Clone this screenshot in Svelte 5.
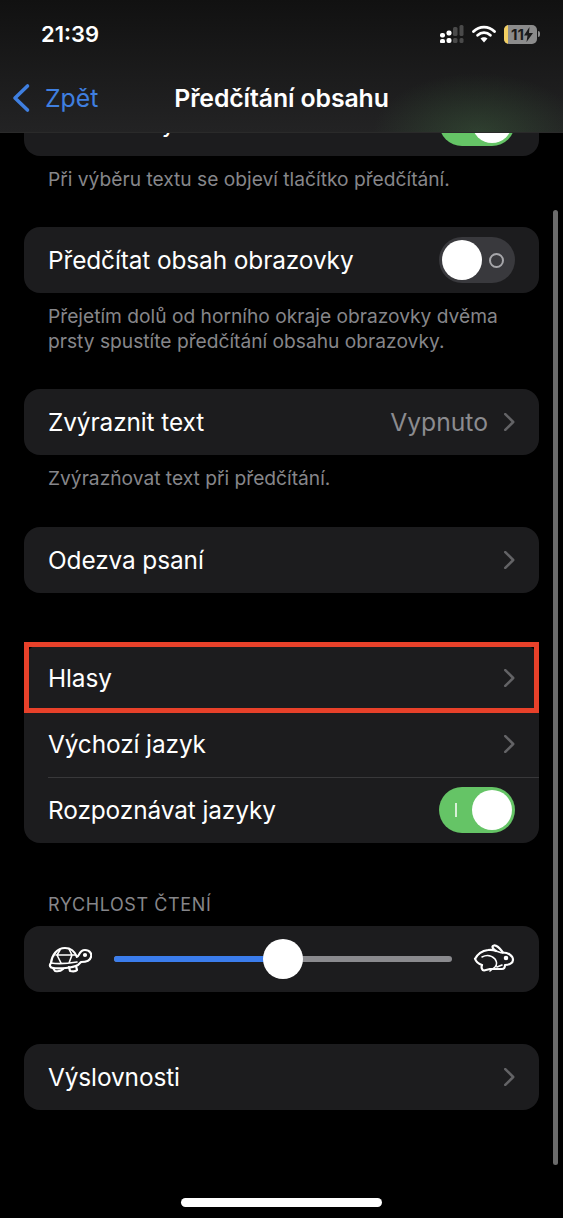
<script>
  const chevron = 'M1 1l7.5 7.5L1 16';
</script>

<div class="phone">
  <header class="top">
    <div class="status">
      <span class="time">21:39</span>
      <div class="status-icons">
        <svg width="24" height="18" viewBox="0 0 24 18">
          <rect x="0" y="8" width="5" height="4.500" rx="2" fill="#fff" />
          <rect x="0" y="14" width="5" height="4.500" rx="2" fill="#fff" />
          <rect x="6.500" y="5.500" width="5" height="5" rx="2" fill="#fff" />
          <rect x="6.500" y="13" width="5" height="5" rx="2" fill="#fff" />
          <rect x="13" y="2" width="4.500" height="9" rx="1.500" fill="#4a4a4a" />
          <rect x="13" y="13" width="4.500" height="5" rx="1.500" fill="#4a4a4a" />
          <rect x="19.500" y="0" width="4" height="11" rx="1.500" fill="#4a4a4a" />
          <rect x="19.500" y="13" width="4" height="5" rx="1.500" fill="#4a4a4a" />
        </svg>
        <svg width="24" height="18" viewBox="0 0 24 18">
          <path d="M1.500 6.500C4.300 3.800 8 2.200 12 2.200s7.700 1.600 10.500 4.300" stroke="#fff" stroke-width="2.800" fill="none" stroke-linecap="round" />
          <path d="M5.600 10.300C7.300 8.700 9.500 7.700 12 7.700s4.700 1 6.400 2.600" stroke="#fff" stroke-width="2.800" fill="none" stroke-linecap="round" />
          <path d="M8.500 13.600c1-.9 2.200-1.400 3.500-1.400s2.500.5 3.500 1.400L12 17.400z" fill="#fff" />
        </svg>
        <div class="battery">
          <div class="battery-body">
            <span class="battery-level"></span>
            <span class="battery-text">11</span>
            <svg width="9" height="15" viewBox="0 0 9 15"><path d="M5.500 0L0 8.500h3.500L2.500 15 9 6H5z" fill="#1a1a1a" /></svg>
          </div>
          <span class="battery-cap"></span>
        </div>
      </div>
    </div>
    <nav class="nav">
      <div class="back">
        <svg width="20" height="30" viewBox="0 0 20 30"><path d="M16.500 3L4 15l12.500 12" fill="none" stroke="#3f7fe0" stroke-width="3.600" stroke-linecap="round" stroke-linejoin="round" /></svg>
        <span>Zpět</span>
      </div>
      <h1>Předčítání obsahu</h1>
    </nav>
  </header>

  <main class="content">
    <section class="group noted">
      <div class="card">
        <div class="row">
          <span class="label">Předčíst výběr</span>
          <span class="toggle on"><i class="mark-on"></i><b></b></span>
        </div>
      </div>
      <p class="note">Při výběru textu se objeví tlačítko předčítání.</p>
    </section>

    <section class="group noted">
      <div class="card">
        <div class="row">
          <span class="label">Předčítat obsah obrazovky</span>
          <span class="toggle"><b></b><i class="mark-off"></i></span>
        </div>
      </div>
      <p class="note">Přejetím dolů od horního okraje obrazovky dvěma<br />prsty spustíte předčítání obsahu obrazovky.</p>
    </section>

    <section class="group noted">
      <div class="card">
        <div class="row">
          <span class="label">Zvýraznit text</span>
          <span class="value">Vypnuto</span>
          <svg class="chev" width="11" height="18" viewBox="0 0 10 17"><path d={chevron} /></svg>
        </div>
      </div>
      <p class="note">Zvýrazňovat text při předčítání.</p>
    </section>

    <section class="group after-notes">
      <div class="card">
        <div class="row">
          <span class="label">Odezva psaní</span>
          <svg class="chev" width="11" height="18" viewBox="0 0 10 17"><path d={chevron} /></svg>
        </div>
      </div>
    </section>

    <section class="group">
      <div class="card">
        <div class="row highlighted">
          <span class="label">Hlasy</span>
          <svg class="chev" width="11" height="18" viewBox="0 0 10 17"><path d={chevron} /></svg>
        </div>
        <div class="row">
          <span class="label">Výchozí jazyk</span>
          <svg class="chev" width="11" height="18" viewBox="0 0 10 17"><path d={chevron} /></svg>
        </div>
        <div class="row divided">
          <span class="label">Rozpoznávat jazyky</span>
          <span class="toggle on"><i class="mark-on"></i><b></b></span>
        </div>
      </div>
    </section>

    <section class="group">
      <h2>RYCHLOST ČTENÍ</h2>
      <div class="card">
        <div class="row slider-row">
          <svg class="speed" width="44" height="28" viewBox="0 0 44 28" fill="none" stroke="#fff" stroke-width="2.200" stroke-linecap="round" stroke-linejoin="round">
            <path d="M3 18C4 10 9 3 17 3c6 0 10 4 12 9 2 0 2-7 8-7 5 0 7 4 6 7-1 4-6 5-10 5l-3 3c-6 3-18 4-25 3-3 0-4-3-2-5z" />
            <path d="M5 23l2 3c3 .6 6 0 8-2M21 22l1 4c3 .6 6 .4 7-1l-1-4" />
            <path d="M8 10h19M12 5l-3 5 4 8M21 4l3 6-3 8M3 18c6 1 14 1 26-1" stroke-width="1.600" />
            <circle cx="37" cy="10" r="1" fill="#fff" />
          </svg>
          <div class="track"><span class="fill"></span><span class="knob"></span></div>
          <svg class="speed" width="42" height="30" viewBox="0 0 42 30" fill="none" stroke="#fff" stroke-width="2.200" stroke-linecap="round" stroke-linejoin="round">
            <path d="M2 15C4 11 8 7 15 6c3-.5 6 0 8 1-3-2-5-5-2-5.500 2-.3 6 3 9 7 5 0 10 3 10 7.500 0 3-4 5-8 5 0 2-1 4-3 4H17l-6 1.500c-2 0-3-3-2-5.500-3-1-6-3-7-6.500z" />
            <path d="M23 7c3 1 5 2 7 2M9 13c4-2 9-2 13 2 2 3 2 6 0 8l-5 4M29 21l-5 2" stroke-width="1.600" />
            <circle cx="33" cy="14" r="1.200" fill="#fff" />
          </svg>
        </div>
      </div>
    </section>

    <section class="group">
      <div class="card">
        <div class="row">
          <span class="label">Výslovnosti</span>
          <svg class="chev" width="11" height="18" viewBox="0 0 10 17"><path d={chevron} /></svg>
        </div>
      </div>
    </section>
  </main>

  <div class="scrollbar"></div>
  <div class="home"></div>
</div>

<style>
  :global(body) {
    background: #000;
  }

  .phone {
    position: relative;
    width: 563px;
    height: 1218px;
    overflow: hidden;
    background: #000;
    color: #fff;
    font-family: Inter, "Noto Sans", sans-serif;
  }

  .top {
    position: absolute;
    top: 0;
    left: 0;
    right: 0;
    z-index: 2;
    height: 133px;
    border-bottom: 1px solid #2a2a2a;
    box-sizing: border-box;
    background:
      radial-gradient(ellipse 105px 60px at 478px 133px, rgba(74, 130, 74, 0.3), rgba(40, 60, 40, 0) 100%),
      linear-gradient(#111, #232324);
  }

  .status {
    display: flex;
    justify-content: space-between;
    align-items: center;
    height: 34px;
    padding: 17px 23px 0 41px;
  }

  .time {
    font-size: 22px;
    font-weight: 600;
  }

  .status-icons {
    display: flex;
    align-items: center;
    gap: 8px;
  }

  .battery {
    display: flex;
    align-items: center;
    gap: 1px;
  }

  .battery-body {
    position: relative;
    display: flex;
    align-items: center;
    justify-content: center;
    width: 33px;
    height: 19px;
    border-radius: 5px;
    overflow: hidden;
    background: #8c8c8c;
    color: #1a1a1a;
    font-size: 15px;
    font-weight: 700;
    padding-left: 3px;
    box-sizing: border-box;
  }

  .battery-level {
    position: absolute;
    left: 0;
    top: 0;
    bottom: 0;
    width: 4px;
    background: #f3cf62;
  }

  .battery-cap {
    width: 2px;
    height: 6px;
    border-radius: 0 2px 2px 0;
    background: #8c8c8c;
  }

  .nav {
    position: relative;
    display: flex;
    align-items: center;
    justify-content: center;
    height: 44px;
    margin-top: 25px;
  }

  .nav h1 {
    margin: 0;
    font-size: 24.8px;
    font-weight: 600;
    letter-spacing: -0.1px;
  }

  .back {
    position: absolute;
    left: 11px;
    top: 0;
    bottom: 0;
    display: flex;
    align-items: center;
    gap: 14px;
    color: #3f7fe0;
    font-size: 24.800px;
  }

  .content {
    padding: 90px 24px 0;
  }

  .group {
    margin-bottom: 52px;
  }

  .group.noted {
    margin-bottom: 35px;
  }

  .after-notes {
    margin-top: 36px;
  }

  .card {
    border-radius: 16px;
    background: #1c1c1e;
  }

  .row {
    position: relative;
    display: flex;
    align-items: center;
    height: 66px;
    padding: 0 24px;
    box-sizing: border-box;
  }

  .label {
    flex: 1;
    font-size: 24.4px;
    letter-spacing: -0.1px;
  }

  .value {
    margin-right: 16px;
    color: #8b8b8f;
    font-size: 24.7px;
  }

  .chev {
    fill: none;
    stroke: #636366;
    stroke-width: 2.4;
    stroke-linecap: round;
    stroke-linejoin: round;
  }

  .divided::before {
    content: "";
    position: absolute;
    top: 0;
    left: 24px;
    right: 0;
    height: 1px;
    background: #38383a;
  }

  .highlighted::after {
    content: "";
    position: absolute;
    inset: -3px 0 -2px;
    border: 5px solid #e8412a;
  }

  .toggle {
    display: flex;
    align-items: center;
    justify-content: space-between;
    width: 76px;
    height: 46px;
    padding: 0 3px;
    border-radius: 23px;
    box-sizing: border-box;
    background: #39393d;
  }

  .toggle b {
    width: 40px;
    height: 40px;
    border-radius: 50%;
    background: #fff;
  }

  .toggle.on {
    background: #65c466;
  }

  .mark-on {
    width: 2px;
    height: 14px;
    margin-left: 13px;
    background: rgba(255, 255, 255, 0.75);
  }

  .mark-off {
    width: 11px;
    height: 11px;
    margin-right: 8px;
    border: 2px solid #a6a6aa;
    border-radius: 50%;
  }

  .note {
    margin: 11px 24px 0;
    color: #86868a;
    font-size: 19.2px;
    line-height: 25px;
  }

  h2 {
    margin: 0 24px 11px;
    color: #86868a;
    font-size: 18px;
    line-height: 20px;
    font-weight: 400;
    letter-spacing: 0.6px;
  }

  .slider-row {
    justify-content: space-between;
  }

  .track {
    position: relative;
    width: 338px;
    height: 6px;
    border-radius: 3px;
    background: #8a8a8e;
  }

  .fill {
    position: absolute;
    left: 0;
    top: 0;
    bottom: 0;
    width: 170px;
    border-radius: 3px 0 0 3px;
    background: #3b7ded;
  }

  .knob {
    position: absolute;
    left: 149px;
    top: -17px;
    width: 40px;
    height: 40px;
    border-radius: 50%;
    background: #fff;
  }

  .scrollbar {
    position: absolute;
    top: 210px;
    right: 5px;
    width: 5px;
    height: 955px;
    border-radius: 3px;
    background: #6b6b6b;
  }

  .home {
    position: absolute;
    left: 181px;
    bottom: 11px;
    width: 201px;
    height: 9px;
    border-radius: 5px;
    background: #fff;
  }
</style>
